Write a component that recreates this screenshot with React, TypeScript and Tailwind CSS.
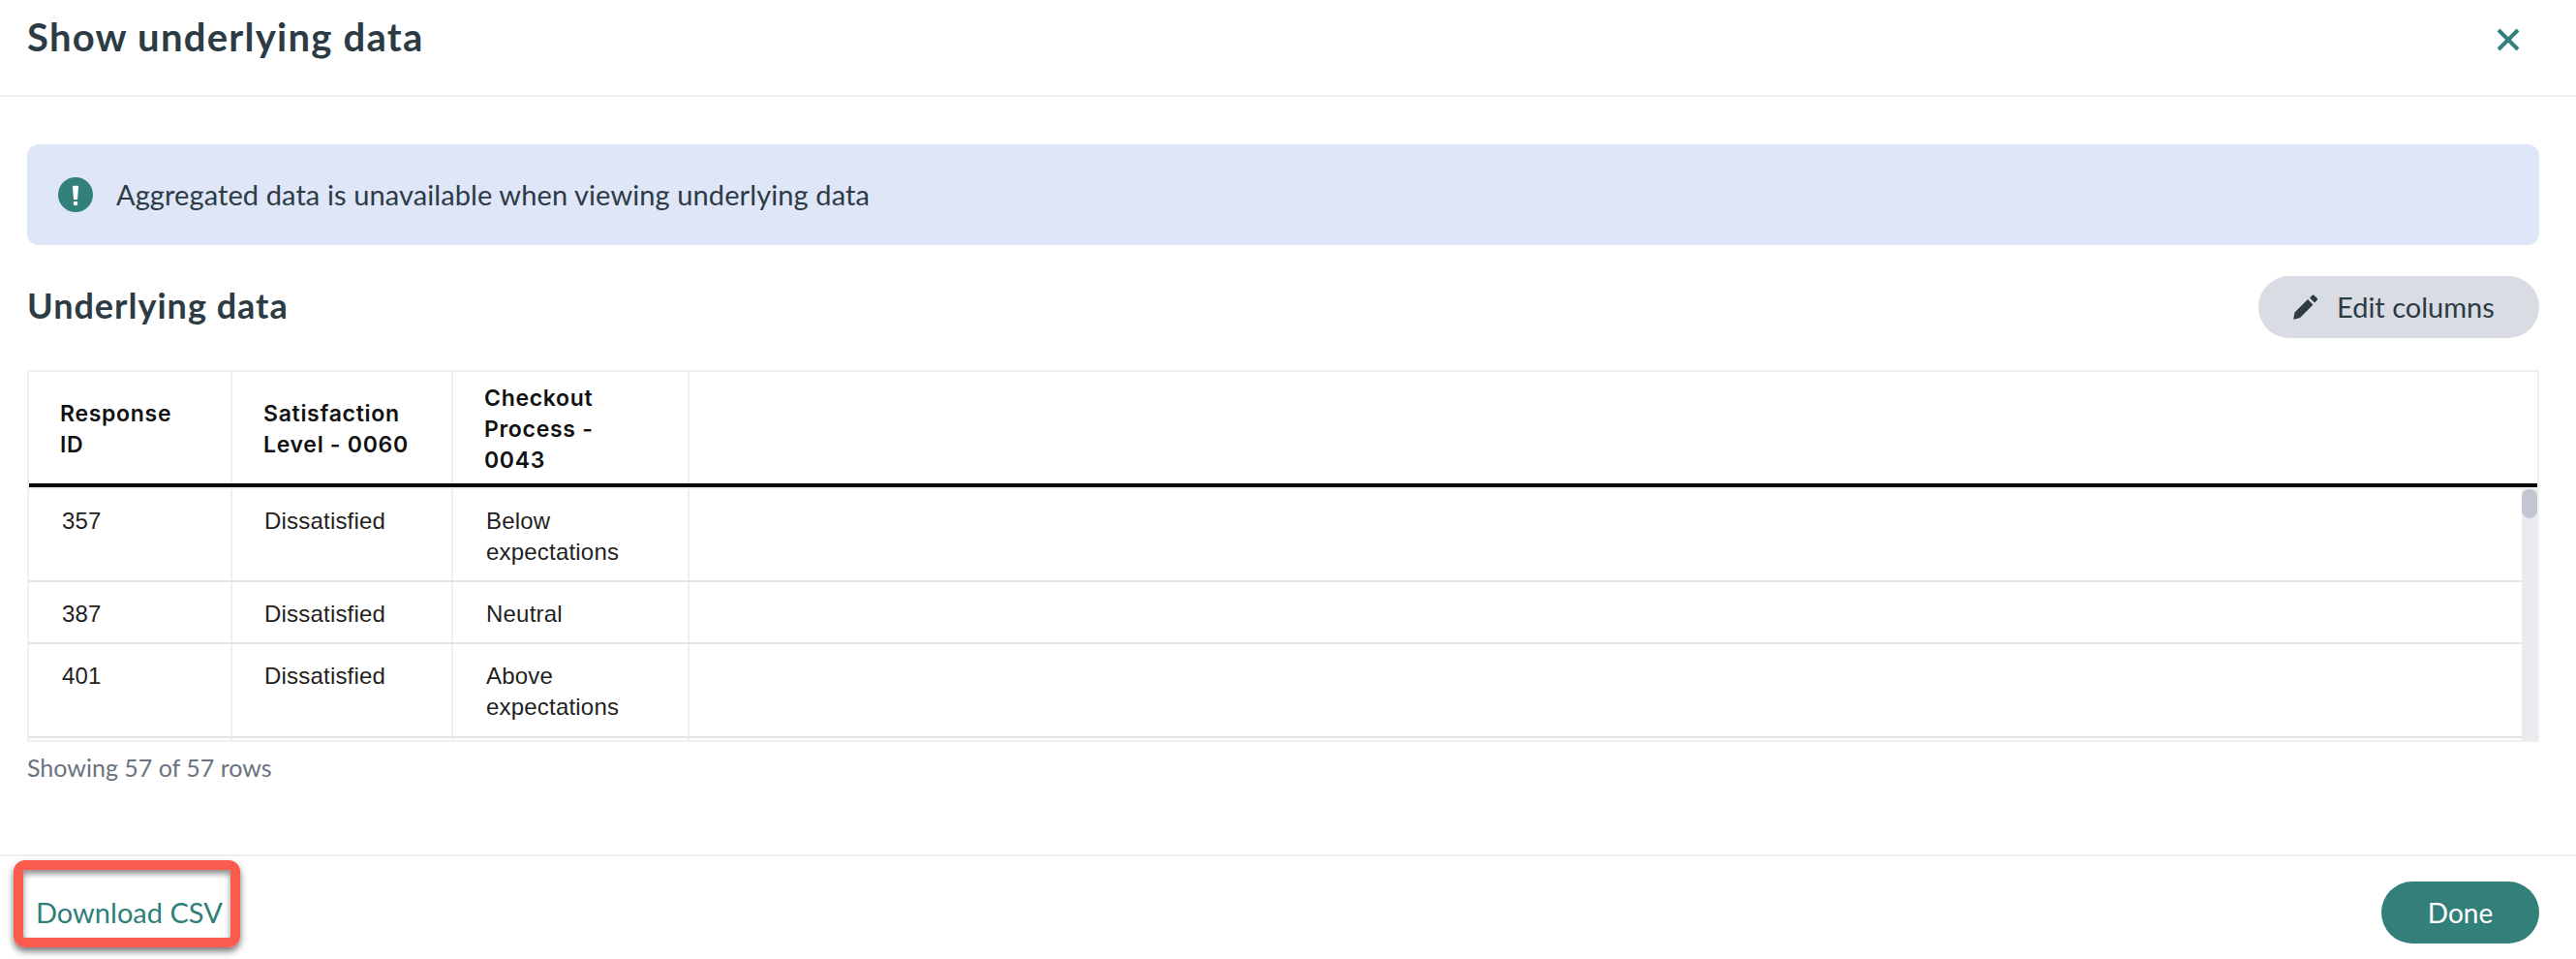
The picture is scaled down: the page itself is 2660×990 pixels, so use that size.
const rows = [
  { id: "357", level: "Dissatisfied", process: ["Below", "expectations"], height: "h-[96px]" },
  { id: "387", level: "Dissatisfied", process: ["Neutral"], height: "h-[64px]" },
  { id: "401", level: "Dissatisfied", process: ["Above", "expectations"], height: "h-[97px]" },
];

function AlertIcon() {
  return (
    <svg width="36" height="36" viewBox="0 0 36 36" className="shrink-0">
      <circle cx="18" cy="18" r="18" fill="#33807b" />
      <path d="M15 10 a1.2 1.2 0 0 1 1.2 -1.2 h3.6 a1.2 1.2 0 0 1 1.2 1.2 L20 23 h-4 Z" fill="#fff" />
      <circle cx="18" cy="27" r="2.3" fill="#fff" />
    </svg>
  );
}

function CloseIcon() {
  return (
    <svg width="24" height="24" viewBox="0 0 24 24">
      <path d="M2 2 L22 22 M22 2 L2 22" stroke="#33807b" strokeWidth="4" fill="none" />
    </svg>
  );
}

function PencilIcon() {
  return (
    <svg width="26" height="26" viewBox="0 0 26 26" className="shrink-0">
      <path d="M1.5 18.5 L15 5 L20.5 10.5 L7 24 L1.5 25.6 Q0 26 0.4 24.5 Z" fill="#2d3b45" />
      <path d="M17 3.5 L19.8 0.7 a1.2 1.2 0 0 1 1.7 0 L24.8 4 a1.2 1.2 0 0 1 0 1.7 L22 8.5 Z" fill="#2d3b45" />
    </svg>
  );
}

export default function App() {
  return (
    <div className="flex h-[990px] w-full flex-col overflow-hidden bg-white font-['Lato','Noto_Sans',sans-serif] text-[#2d3b45]">
      <header className="flex h-[100px] shrink-0 items-start justify-between border-b-2 border-[#eeeff1] pl-[28px] pr-[58px]">
        <h1 className="mt-[14px] text-[40px] leading-[48px] font-bold tracking-[1.25px]">Show underlying data</h1>
        <button className="mt-[29px]">
          <CloseIcon />
        </button>
      </header>

      <main className="flex-1 pl-[28px] pr-[38px] pt-[49px]">
        <div className="flex h-[104px] items-center gap-[24px] rounded-[12px] bg-[#dee6f8] pl-[32px]">
          <AlertIcon />
          <span className="text-[29px] tracking-[0.1px]">Aggregated data is unavailable when viewing underlying data</span>
        </div>

        <div className="mt-[32px] flex h-[64px] items-center justify-between">
          <h2 className="mb-[4px] text-[36px] font-bold tracking-[1px]">Underlying data</h2>
          <button className="flex h-[64px] w-[290px] items-center gap-[19px] rounded-full bg-[#d9dce3] pl-[36px] text-[29px]">
            <PencilIcon />
            Edit columns
          </button>
        </div>

        <div className="mt-[33px] flex h-[384px] flex-col border-2 border-[#eeeff1] font-['Liberation_Sans',sans-serif] text-[24px] leading-[32px] tracking-[0.2px] text-[#1f1f1f]">
          <div className="flex h-[119px] shrink-0 border-b-[4px] border-black font-['Inter',sans-serif] text-[23px] leading-[32px] font-semibold tracking-[0.7px] text-[#111]">
            <div className="flex w-[210px] items-center border-r-2 border-[#eeeff1] pl-[32px] pt-[3px]">
              <span>
                Response
                <br />
                ID
              </span>
            </div>
            <div className="flex w-[228px] items-center border-r-2 border-[#eeeff1] pl-[32px] pt-[3px]">
              <span>
                Satisfaction
                <br />
                Level - 0060
              </span>
            </div>
            <div className="flex w-[244px] items-center border-r-2 border-[#eeeff1] pl-[32px] pt-[3px]">
              <span>
                Checkout
                <br />
                Process -
                <br />
                0043
              </span>
            </div>
          </div>
          <div className="flex min-h-0 flex-1 border-t-2 border-[#eeeff1]">
            <div className="flex min-w-0 flex-1 flex-col overflow-hidden">
              {rows.map((row) => (
                <div key={row.id} className={`flex shrink-0 border-b-2 border-[#e2e4e9] ${row.height}`}>
                  <div className="w-[210px] border-r-2 border-[#eeeff1] pl-[34px] pt-[17px]">{row.id}</div>
                  <div className="w-[228px] border-r-2 border-[#eeeff1] pl-[33px] pt-[17px]">{row.level}</div>
                  <div className="w-[244px] border-r-2 border-[#eeeff1] pl-[34px] pt-[17px]">
                    {row.process.map((line) => (
                      <div key={line}>{line}</div>
                    ))}
                  </div>
                </div>
              ))}
              <div className="flex h-[20px] shrink-0">
                <div className="w-[210px] border-r-2 border-[#eeeff1]" />
                <div className="w-[228px] border-r-2 border-[#eeeff1]" />
                <div className="w-[244px] border-r-2 border-[#eeeff1]" />
              </div>
            </div>
            <div className="w-[16px] shrink-0 bg-[#e9ebef]">
              <div className="h-[30px] w-[16px] rounded-full bg-[#c0c7d1]" />
            </div>
          </div>
        </div>

        <p className="mt-[10px] text-[25px] leading-[32px] text-[#6b7280]">Showing 57 of 57 rows</p>
      </main>

      <footer className="relative flex h-[108px] shrink-0 items-center justify-between border-t-2 border-[#eeeff1] pl-[37px] pr-[38px] pt-[10px]">
        <a className="text-[29px] text-[#2f7f79]">Download CSV</a>
        <button className="h-[64px] w-[163px] rounded-full bg-[#33807b] text-[28px] text-white">Done</button>
        <div className="absolute left-[14px] top-[4px] h-[90px] w-[234px] rounded-[12px] border-[10px] border-[#fb5a4e] shadow-[0_4px_7px_rgba(0,0,0,0.55),inset_0_4px_6px_rgba(0,0,0,0.45)]" />
      </footer>
    </div>
  );
}
